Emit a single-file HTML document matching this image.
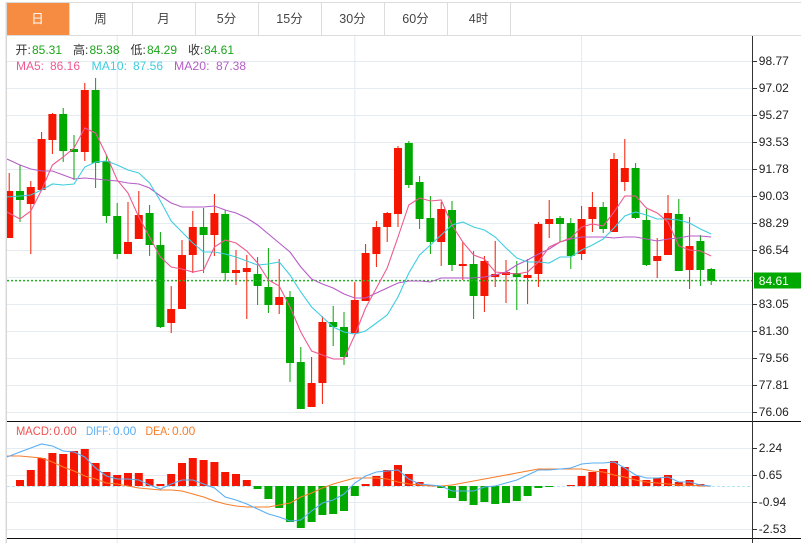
<!DOCTYPE html>
<html><head><meta charset="utf-8"><style>
html,body{margin:0;padding:0;background:#fff;width:801px;height:543px;overflow:hidden}
svg{display:block}
text{font-family:"Liberation Sans","Noto Sans CJK SC",sans-serif;font-size:12px}
.tab{font-size:12.5px;fill:#444;text-anchor:middle}
.ax{fill:#222}
</style></head><body>
<svg width="801" height="543" viewBox="0 0 801 543" xmlns="http://www.w3.org/2000/svg">
<!-- grid -->
<path fill="none" stroke="#e4ecf2" d="M7 61.5H752M7 88.5H752M7 115.5H752M7 142.5H752M7 169.5H752M7 196.5H752M7 223.5H752M7 250.5H752M7 277.5H752M7 304.5H752M7 331.5H752M7 358.5H752M7 385.5H752M7 412.5H752M7 448.5H752M7 475.5H752M7 502.5H752M7 529.5H752"/>
<path fill="none" stroke="#e2eaf3" d="M117.2 36V543M354.8 36V543M581.6 36V543"/>
<!-- tabs -->
<rect x="7" y="3" width="62" height="32" fill="#f68c42"/>
<path fill="none" stroke="#dcdcdc" d="M6 2.5H801M6 35.5H801M69.5 3V35M132.5 3V35M195.5 3V35M258.5 3V35M321.5 3V35M384.5 3V35M447.5 3V35M510.5 3V35"/>
<path fill="none" stroke="#d8d8d8" stroke-width="1.5" d="M6.3 2V543"/>
<text class="tab" x="37.5" y="23" style="fill:#fff">日</text>
<text class="tab" x="100.5" y="23">周</text>
<text class="tab" x="163.5" y="23">月</text>
<text class="tab" x="226.5" y="23">5分</text>
<text class="tab" x="289.5" y="23">15分</text>
<text class="tab" x="352.5" y="23">30分</text>
<text class="tab" x="415.5" y="23">60分</text>
<text class="tab" x="478.5" y="23">4时</text>
<!-- red wicks -->
<path fill="none" stroke="#f51a00" d="M9.2 173V238M30.8 181V254M41.6 132V190M52.4 113V154M84.8 83V161M128 202V254M138.8 191V239M171.2 286V333M182 240V309M192.8 211V273M214.4 194V256M236 250V285M246.8 255V319M279.2 259V314M311.6 357V407M322.4 316V404M354.8 282V333M365.6 244V301M376.4 221V267M387.2 212V242M398 146V227M441.2 202V266M462.8 242V280M484.4 256V312M495.2 241V287M506 260V303M527.6 259V304M538.4 222V287M549.2 200V238M581.6 206V260M592.4 192V232M614 153V232M624.8 139V191M657.2 238V278M668 195V255M689.6 217V289"/>
<!-- green wicks -->
<path fill="none" stroke="#00a800" d="M20 165V222M63.2 108V162M74 135V180M95.6 78V188M106.4 155V223M117.2 203V259M149.6 205V256M160.4 232V328M203.6 208V273M225.2 210V281M257.6 257V305M268.4 248V313M290 291V382M300.8 347V409M333.2 306V346M344 312V365M408.8 141V188M419.6 176V229M430.4 196V254M452 201V271M473.6 251V319M516.8 261V310M560 216V242M570.8 218V269M603.2 202V233M635.6 163V219M646.4 209V266M678.8 199V271M700.4 235V286M711.2 268V285"/>
<!-- red bodies -->
<path fill="#f51500" d="M7 191h6.200V238H7zM26.800 187h8V204h-8zM37.600 139h8V190h-8zM48.400 114h8V140h-8zM80.800 90h8V152h-8zM124 242h8V254h-8zM134.800 215h8V239h-8zM167.200 309h8V323h-8zM178 255h8V309h-8zM188.800 227h8V255h-8zM210.400 213h8V235h-8zM232 270h8V273h-8zM242.800 268h8V272h-8zM275.200 297h8V305h-8zM307.600 383h8V407h-8zM318.400 322h8V383h-8zM350.800 300h8V333h-8zM361.600 253h8V301h-8zM372.400 227h8V254h-8zM383.200 213h8V227h-8zM394 148h8V214h-8zM437.200 209h8V242h-8zM458.800 264h8V266h-8zM480.400 261h8V296h-8zM491.200 274h8V277h-8zM502 272h8V275h-8zM523.600 275h8V278h-8zM534.400 224h8V274h-8zM545.200 219h8V224h-8zM577.600 219h8V254h-8zM588.400 207h8V219h-8zM610 159h8V232h-8zM620.800 168h8V182h-8zM653.200 256h8V261h-8zM664 213h8V255h-8zM685.600 246h8V270h-8z"/>
<!-- green bodies -->
<path fill="#00a800" d="M16 191h8V200h-8zM59.200 114h8V151h-8zM70 149h8V152h-8zM91.600 90h8V163h-8zM102.400 161h8V216h-8zM113.200 216h8V254h-8zM145.600 213h8V245h-8zM156.400 245h8V327h-8zM199.600 227h8V235h-8zM221.200 214h8V273h-8zM253.600 274h8V286h-8zM264.400 287h8V305h-8zM286 297h8V363h-8zM296.800 362h8V409h-8zM329.200 322h8V327h-8zM340 327h8V357h-8zM404.800 143h8V185h-8zM415.600 182h8V219h-8zM426.400 218h8V242h-8zM448 210h8V265h-8zM469.600 264h8V296h-8zM512.800 273h8V277h-8zM556 218h8V224h-8zM566.800 223h8V256h-8zM599.200 207h8V229h-8zM631.600 168h8V218h-8zM642.400 220h8V265h-8zM674.800 214h8V271h-8zM696.400 241h8V270h-8zM707.200 269h8V281h-8z"/>
<!-- price line -->
<path fill="none" stroke="#22b422" stroke-width="1.500" stroke-dasharray="2 2" d="M7 280.600H752"/>
<!-- MA lines -->
<polyline fill="none" stroke="#b55cc8" stroke-width="1.100" points="7,159 20,165 30.800,169 41.600,171 52.400,171 63.200,175 74,179 84.800,178 95.600,179 106.400,180 117.200,181 128,183 138.800,184 149.600,188 160.400,196 171.200,203 182,207 192.800,207 203.600,207 214.400,206 225.200,210 236,213 246.800,218 257.600,225 268.400,234 279.200,243 290,252 300.800,267 311.600,279 322.400,284 333.200,288 344,294 354.800,298 365.600,298 376.400,293 387.200,288 398,283 408.800,281 419.600,281 430.400,282 441.200,278 452,278 462.800,278 473.600,278 484.400,277 495.200,275 506,272 516.800,265 527.600,260 538.400,254 549.200,249 560,242 570.800,239 581.600,237 592.400,237 603.200,237 614,238 624.800,237 635.600,237 646.400,239 657.200,241 668,239 678.800,238 689.600,236 700.400,236 711.200,237"/>
<polyline fill="none" stroke="#3fcde0" stroke-width="1.100" points="7,197 20,196 30.800,195 41.600,190 52.400,184 63.200,185 74,184 84.800,167 95.600,162 106.400,161 117.200,165 128,170 138.800,173 149.600,183 160.400,201 171.200,221 182,232 192.800,243 203.600,252 214.400,252 225.200,254 236,257 246.800,261 257.600,265 268.400,264 279.200,262 290,275 300.800,292 311.600,307 322.400,317 333.200,327 344,332 354.800,334 365.600,331 376.400,323 387.200,315 398,297 408.800,273 419.600,255 430.400,245 441.200,235 452,225 462.800,222 473.600,227 484.400,230 495.200,237 506,248 516.800,258 527.600,262 538.400,262 549.200,263 560,257 570.800,257 581.600,250 592.400,245 603.200,239 614,228 624.800,216 635.600,212 646.400,215 657.200,219 668,219 678.800,220 689.600,223 700.400,229 711.200,234"/>
<polyline fill="none" stroke="#ee5a90" stroke-width="1.100" points="7,212 20,219 30.800,211 41.600,190 52.400,165 63.200,157 74,148 84.800,128 95.600,133 106.400,155 117.200,180 128,193 138.800,217 149.600,237 160.400,257 171.200,267 182,269 192.800,272 203.600,270 214.400,247 225.200,240 236,243 246.800,251 257.600,263 268.400,280 279.200,286 290,307 300.800,332 311.600,351 322.400,355 333.200,359 344,359 354.800,335 365.600,308 376.400,288 387.200,268 398,237 408.800,205 419.600,198 430.400,201 441.200,200 452,225 462.800,242 473.600,255 484.400,259 495.200,272 506,273 516.800,274 527.600,272 538.400,262 549.200,247 560,242 570.800,238 581.600,227 592.400,224 603.200,226 614,212 624.800,196 635.600,196 646.400,208 657.200,213 668,222 678.800,246 689.600,250 700.400,251 711.200,256"/>
<!-- MACD -->
<path fill="none" stroke="#b8e4f8" stroke-dasharray="3 2" d="M7 486.500H750"/>
<path fill="#f51500" d="M16 480h8V486h-8zM26.800 470h8V486h-8zM37.600 458h8V486h-8zM48.400 453h8V486h-8zM59.200 454h8V486h-8zM70 451h8V486h-8zM80.800 449h8V486h-8zM91.600 463h8V486h-8zM102.400 472h8V486h-8zM113.200 475h8V486h-8zM124 473h8V486h-8zM134.800 473h8V486h-8zM145.600 479h8V486h-8zM156.400 484h8V486h-8zM167.200 474h8V486h-8zM178 463h8V486h-8zM188.800 458h8V486h-8zM199.600 460h8V486h-8zM210.400 462h8V486h-8zM221.200 472h8V486h-8zM232 474h8V486h-8zM242.800 480h8V486h-8zM361.600 484h8V486h-8zM372.400 476h8V486h-8zM383.200 470h8V486h-8zM394 465h8V486h-8zM404.800 474h8V486h-8zM415.600 482h8V486h-8zM426.400 485h8V486h-8zM566.800 485h8V486h-8zM577.600 476h8V486h-8zM588.400 472h8V486h-8zM599.200 469h8V486h-8zM610 461h8V486h-8zM620.800 467h8V486h-8zM631.600 476h8V486h-8zM642.400 480h8V486h-8zM653.200 478h8V486h-8zM664 475h8V486h-8zM674.800 482h8V486h-8zM685.600 480h8V486h-8zM696.400 484h8V486h-8z"/>
<path fill="#00a800" d="M253.600 486h8V489h-8zM264.400 486h8V499h-8zM275.200 486h8V508h-8zM286 486h8V522h-8zM296.800 486h8V528h-8zM307.600 486h8V522h-8zM318.400 486h8V515h-8zM329.200 486h8V514h-8zM340 486h8V511h-8zM350.800 486h8V496h-8zM437.200 486h8V488h-8zM448 486h8V498h-8zM458.800 486h8V501h-8zM469.600 486h8V505h-8zM480.400 486h8V502h-8zM491.200 486h8V504h-8zM502 486h8V503h-8zM512.800 486h8V501h-8zM523.600 486h8V496h-8zM534.400 486h8V488h-8zM545.200 486h8V487h-8z"/>
<polyline fill="none" stroke="#f97d28" stroke-width="1.100" points="7,456 20,456 30.800,457 41.600,458 52.400,462 63.200,467 74,471 84.800,476 95.600,479 106.400,483 117.200,484 128,486 138.800,488 149.600,489 160.400,490 171.200,490 182,491 192.800,494 203.600,497 214.400,501 225.200,504 236,506 246.800,507 257.600,507 268.400,507 279.200,505 290,503 300.800,497 311.600,493 322.400,488 333.200,484 344,481 354.800,478 365.600,478 376.400,478 387.200,479 398,482 408.800,484 419.600,485 430.400,486 441.200,486 452,485 462.800,483 473.600,481 484.400,479 495.200,477 506,475 516.800,473 527.600,471 538.400,469 549.200,469 560,469 570.800,469 581.600,469 592.400,471 603.200,472 614,475 624.800,477 635.600,480 646.400,482 657.200,483 668,484 678.800,485 689.600,485 700.400,486 711.200,486"/>
<polyline fill="none" stroke="#5aaef5" stroke-width="1.100" points="7,457 20,452 30.800,448 41.600,444 52.400,446 63.200,451 74,452 84.800,457 95.600,468 106.400,476 117.200,479 128,479 138.800,480 149.600,485 160.400,489 171.200,484 182,480 192.800,480 203.600,484 214.400,488 225.200,497 236,500 246.800,504 257.600,509 268.400,514 279.200,517 290,521 300.800,520 311.600,511 322.400,503 333.200,500 344,494 354.800,483 365.600,476 376.400,472 387.200,471 398,470 408.800,479 419.600,484 430.400,485 441.200,486 452,491 462.800,491 473.600,491 484.400,487 495.200,486 506,483 516.800,480 527.600,475 538.400,470 549.200,470 560,469 570.800,468 581.600,464 592.400,463 603.200,463 614,462 624.800,468 635.600,475 646.400,478 657.200,478 668,477 678.800,482 689.600,482 700.400,485 711.200,486"/>
<!-- frame lines -->
<path fill="none" stroke="#111" d="M7 421.500H801M7 538.500H801"/>
<path fill="none" stroke="#333" d="M752.500 36V543M752 61.500h5M752 88.500h5M752 115.500h5M752 142.500h5M752 169.500h5M752 196.500h5M752 223.500h5M752 250.500h5M752 304.500h5M752 331.500h5M752 358.500h5M752 385.500h5M752 412.500h5M752 448.500h5M752 475.500h5M752 502.500h5M752 529.500h5"/>
<!-- axis labels -->
<text class="ax" x="758.800" y="65">98.77</text>
<text class="ax" x="758.800" y="92">97.02</text>
<text class="ax" x="758.800" y="119">95.27</text>
<text class="ax" x="758.800" y="146">93.53</text>
<text class="ax" x="758.800" y="173">91.78</text>
<text class="ax" x="758.800" y="200">90.03</text>
<text class="ax" x="758.800" y="227">88.29</text>
<text class="ax" x="758.800" y="254">86.54</text>
<rect x="754" y="272.500" width="47" height="16" fill="#00a800"/>
<text x="758.800" y="285" style="fill:#fff">84.61</text>
<text class="ax" x="758.800" y="308">83.05</text>
<text class="ax" x="758.800" y="335">81.30</text>
<text class="ax" x="758.800" y="362">79.56</text>
<text class="ax" x="758.800" y="389">77.81</text>
<text class="ax" x="758.800" y="416">76.06</text>
<text class="ax" x="758.800" y="452">2.24</text>
<text class="ax" x="758.800" y="479">0.65</text>
<text class="ax" x="758.800" y="506">-0.94</text>
<text class="ax" x="758.800" y="533">-2.53</text>
<!-- info -->
<text x="15.500" y="54" fill="#333">开:</text><text x="32" y="54" fill="#1aa51a">85.31</text>
<text x="73" y="54" fill="#333">高:</text><text x="89.500" y="54" fill="#1aa51a">85.38</text>
<text x="130.500" y="54" fill="#333">低:</text><text x="147" y="54" fill="#1aa51a">84.29</text>
<text x="188" y="54" fill="#333">收:</text><text x="204" y="54" fill="#1aa51a">84.61</text>
<text x="16" y="70" fill="#ee5a90">MA5:</text><text x="50" y="70" fill="#ee5a90">86.16</text>
<text x="91.500" y="70" fill="#3fcde0" textLength="35.500" lengthAdjust="spacingAndGlyphs">MA10:</text><text x="133" y="70" fill="#3fcde0">87.56</text>
<text x="174" y="70" fill="#b55cc8" textLength="35.500" lengthAdjust="spacingAndGlyphs">MA20:</text><text x="216" y="70" fill="#b55cc8">87.38</text>
<text x="16" y="435" fill="#f25050" textLength="36" lengthAdjust="spacingAndGlyphs">MACD:</text><text x="53.500" y="435" fill="#f25050">0.00</text>
<text x="86" y="435" fill="#5aaef5" textLength="25" lengthAdjust="spacingAndGlyphs">DIFF:</text><text x="113" y="435" fill="#5aaef5">0.00</text>
<text x="145.500" y="435" fill="#f97d28" textLength="24.500" lengthAdjust="spacingAndGlyphs">DEA:</text><text x="172" y="435" fill="#f97d28">0.00</text>
</svg>
</body></html>
